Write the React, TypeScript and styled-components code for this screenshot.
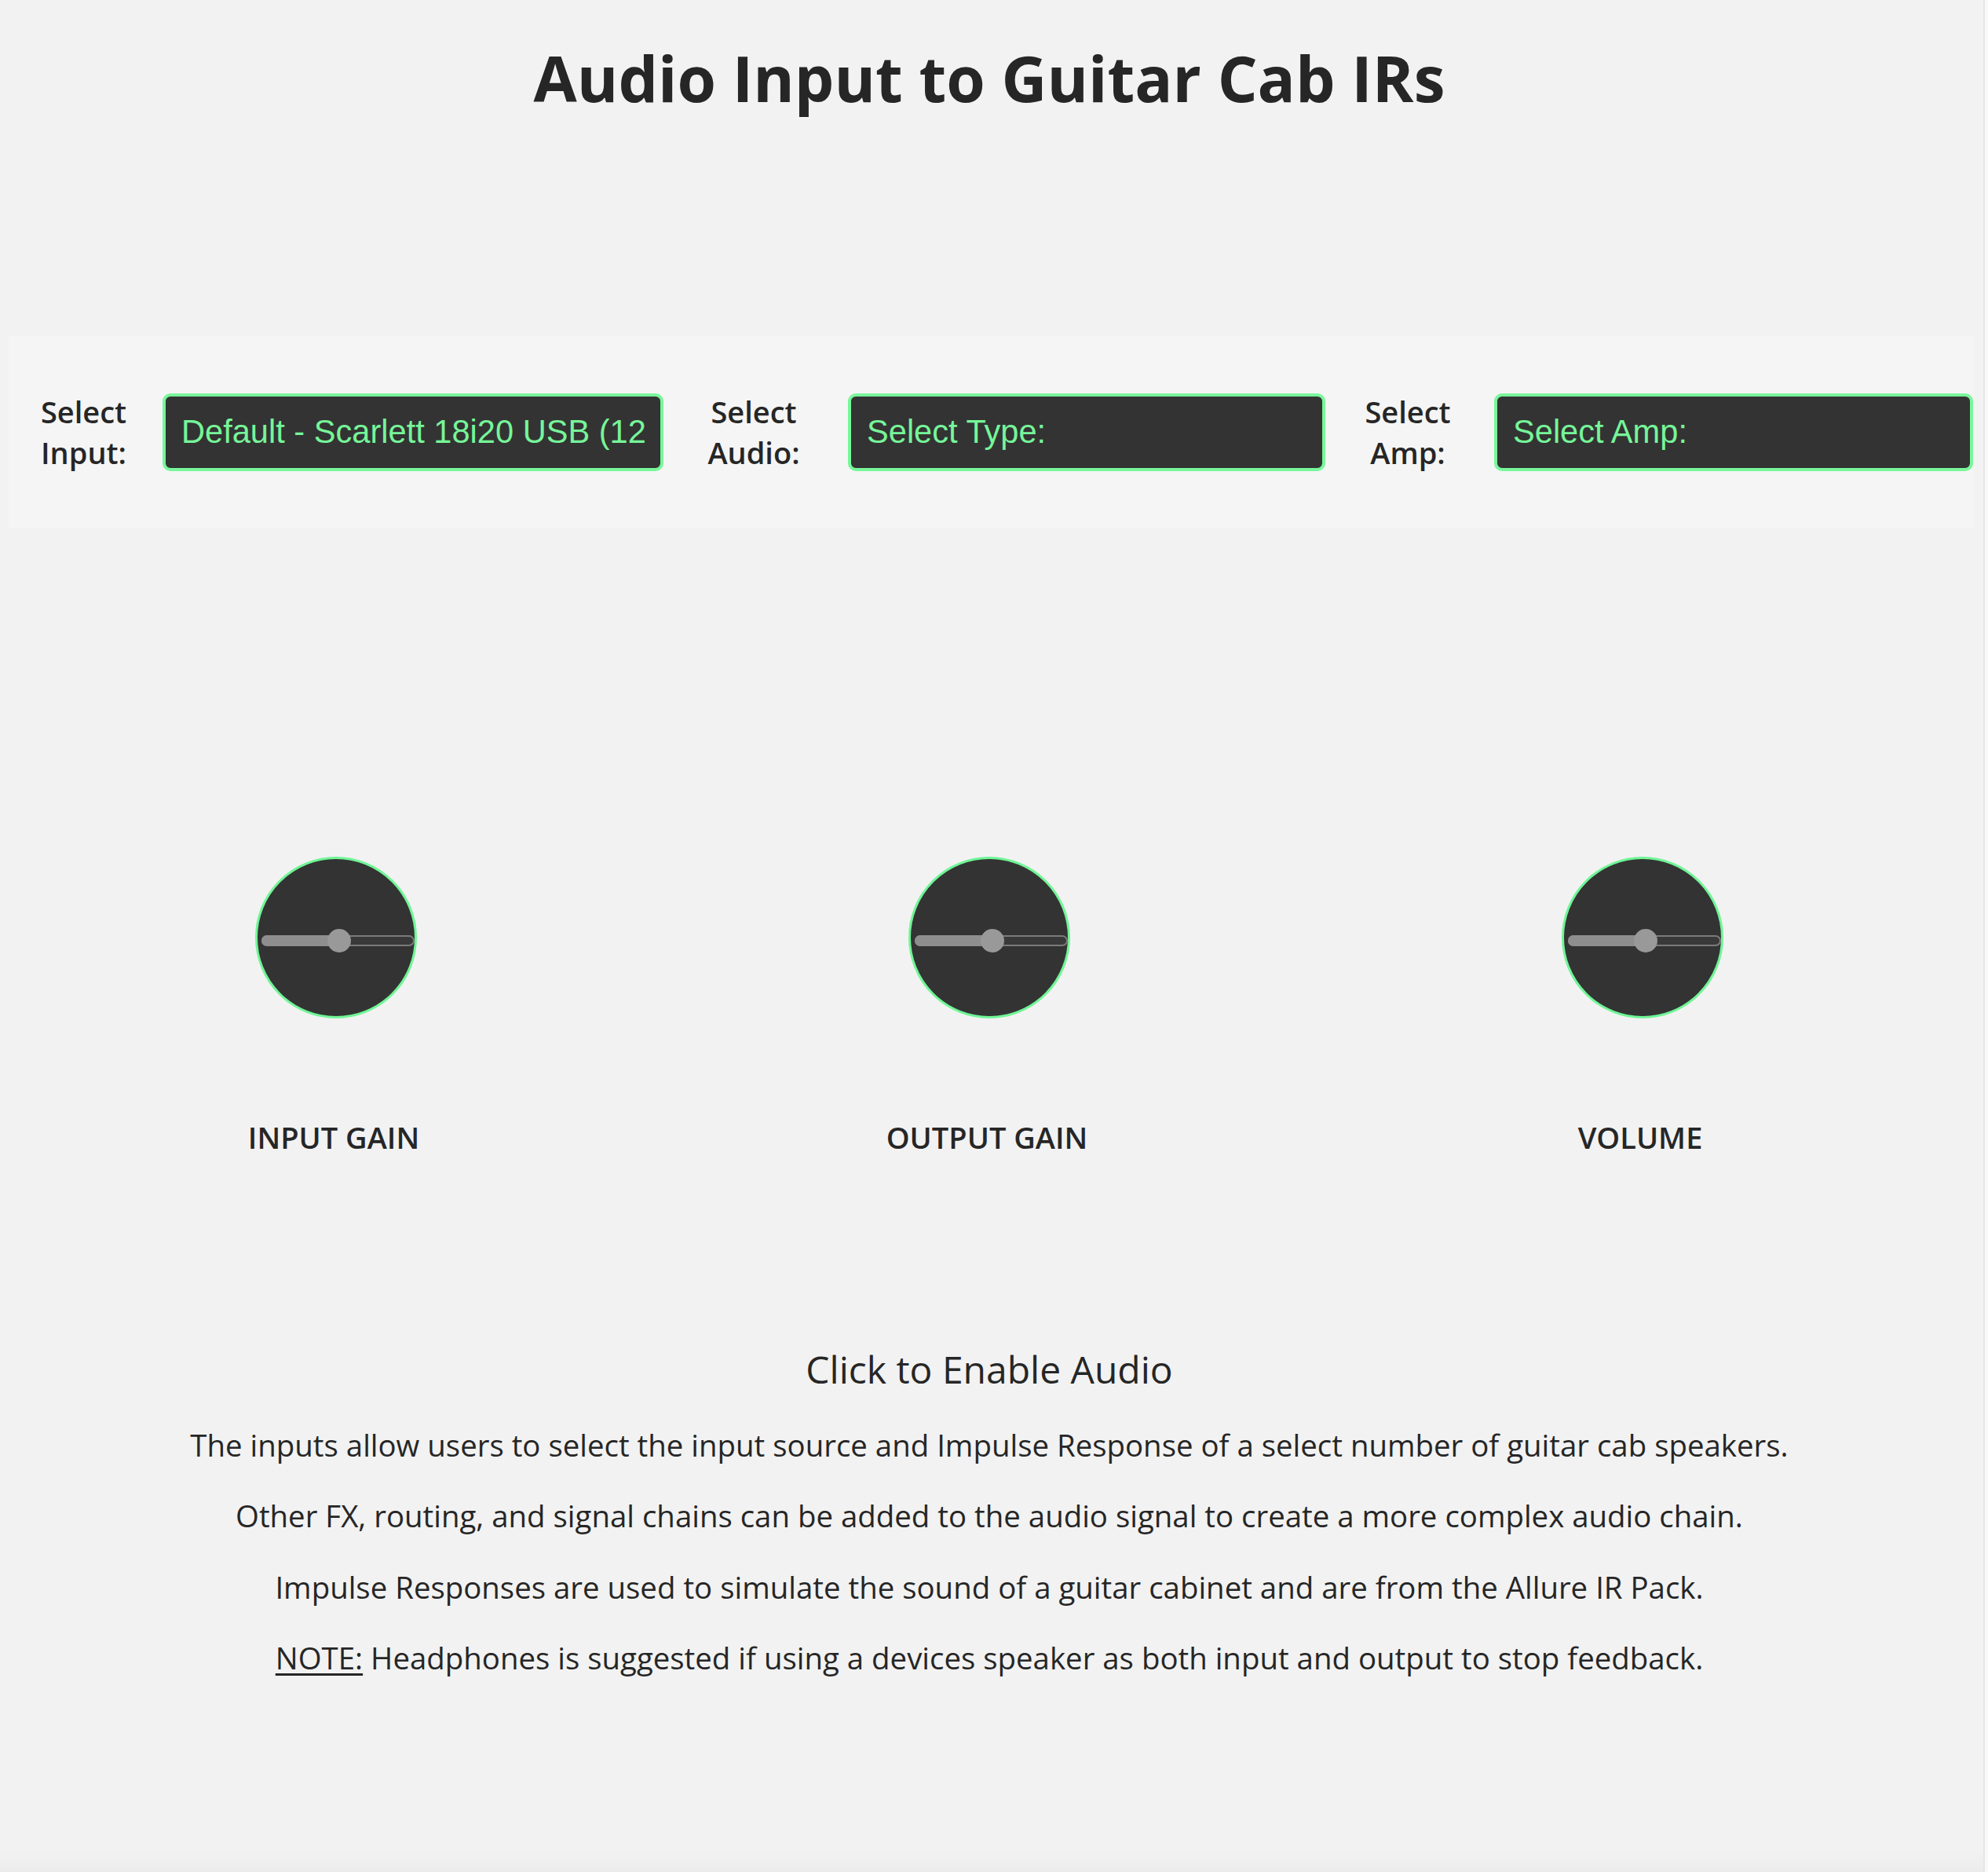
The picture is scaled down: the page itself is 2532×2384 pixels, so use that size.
import React from "react";
import styled, { createGlobalStyle } from "styled-components";

const GlobalStyle = createGlobalStyle`
  html, body {
    margin: 0;
    padding: 0;
    background: #f9f9f9;
  }
  body {
    font-family: "Open Sans", "Noto Sans", sans-serif;
    color: #262626;
  }
  * { box-sizing: border-box; }
`;

const Page = styled.div`
  width: 2528px;
  min-height: 2384px;
  background: #f2f2f2;
  border-right: 2px solid #e6e6e6;
  box-shadow: inset 0 -34px 30px -30px rgba(0, 0, 0, 0.05);
  padding: 44px 18px 0 12px;
`;

const Title = styled.h1`
  margin: 0;
  font-size: 80px;
  font-weight: 700;
  line-height: 109px;
  text-align: center;
  color: #262626;
`;

const Panel = styled.section`
  margin: 275px -6px 0 -1px;
  height: 244px;
  background: #f5f5f5;
  display: grid;
  grid-template-columns: 196px 638px 235px 608px 215px 610px;
  align-items: center;
`;

const LabelCell = styled.label`
  display: flex;
  justify-content: center;
  padding-right: 5px;
`;

const LabelText = styled.span`
  width: min-content;
  font-size: 38px;
  font-weight: 600;
  line-height: 52px;
  text-align: center;
  color: #262626;
`;

const Select = styled.div`
  height: 99px;
  background: #333333;
  border: 4px solid #78f79a;
  border-radius: 10px;
  padding: 0 20px;
  display: flex;
  align-items: center;
  overflow: hidden;
  white-space: nowrap;
  font-family: "Liberation Sans", Arial, sans-serif;
  font-size: 41.6px;
  color: #76f599;
`;

const KnobRow = styled.section`
  margin-top: 419px;
  display: grid;
  grid-template-columns: repeat(3, 1fr);
`;

const KnobCol = styled.div`
  display: flex;
  flex-direction: column;
  align-items: center;
  gap: 125px;
`;

const Knob = styled.div`
  width: 206px;
  height: 206px;
  border-radius: 50%;
  background: #333333;
  border: 3px solid #70f596;
  display: flex;
  align-items: center;
  padding-left: 5px;
`;

const Track = styled.div`
  position: relative;
  width: 195px;
  height: 14px;
  margin-top: 8px;
  border-radius: 7px;
  background: #393939;
  border: 2px solid #7a7a7a;
`;

const Fill = styled.div`
  position: absolute;
  left: -2px;
  top: -2px;
  bottom: -2px;
  border-radius: 7px;
  background: #8e8e8e;
`;

const Thumb = styled.div`
  position: absolute;
  top: 50%;
  width: 30px;
  height: 30px;
  margin: -15px 0 0 -15px;
  border-radius: 50%;
  background: #999999;
`;

const KnobLabel = styled.div`
  font-size: 38px;
  font-weight: 600;
  line-height: 52px;
  color: #262626;
  padding-right: 6px;
`;

const Info = styled.section`
  margin-top: 237px;
  text-align: center;
`;

const Enable = styled.h2`
  margin: 0 0 38px;
  font-size: 48px;
  font-weight: 400;
  line-height: 65px;
  color: #262626;
`;

const Para = styled.p`
  margin: 0 0 38.4px;
  font-size: 38.4px;
  line-height: 52px;
  color: #262626;
`;

const Note = styled.span`
  text-decoration: underline;
  text-underline-offset: 5px;
`;

type KnobProps = { label: string; value: number };

const KnobControl = ({ label, value }: KnobProps) => (
  <KnobCol>
    <Knob>
      <Track>
        <Fill style={{ width: `calc(${value}% + 2px)` }} />
        <Thumb style={{ left: `${value}%` }} />
      </Track>
    </Knob>
    <KnobLabel>{label}</KnobLabel>
  </KnobCol>
);

export default function App() {
  return (
    <>
      <GlobalStyle />
      <Page>
        <Title>Audio Input to Guitar Cab IRs</Title>
        <Panel>
          <LabelCell>
            <LabelText>Select Input:</LabelText>
          </LabelCell>
          <Select>Default - Scarlett 18i20 USB (12</Select>
          <LabelCell>
            <LabelText>Select Audio:</LabelText>
          </LabelCell>
          <Select>Select Type:</Select>
          <LabelCell>
            <LabelText>Select Amp:</LabelText>
          </LabelCell>
          <Select>Select Amp:</Select>
        </Panel>
        <KnobRow>
          <KnobControl label="INPUT GAIN" value={51} />
          <KnobControl label="OUTPUT GAIN" value={51} />
          <KnobControl label="VOLUME" value={51} />
        </KnobRow>
        <Info>
          <Enable>Click to Enable Audio</Enable>
          <Para>
            The inputs allow users to select the input source and Impulse Response of a select number of guitar cab speakers.
          </Para>
          <Para>
            Other FX, routing, and signal chains can be added to the audio signal to create a more complex audio chain.
          </Para>
          <Para>
            Impulse Responses are used to simulate the sound of a guitar cabinet and are from the Allure IR Pack.
          </Para>
          <Para>
            <Note>NOTE:</Note> Headphones is suggested if using a devices speaker as both input and output to stop feedback.
          </Para>
        </Info>
      </Page>
    </>
  );
}
